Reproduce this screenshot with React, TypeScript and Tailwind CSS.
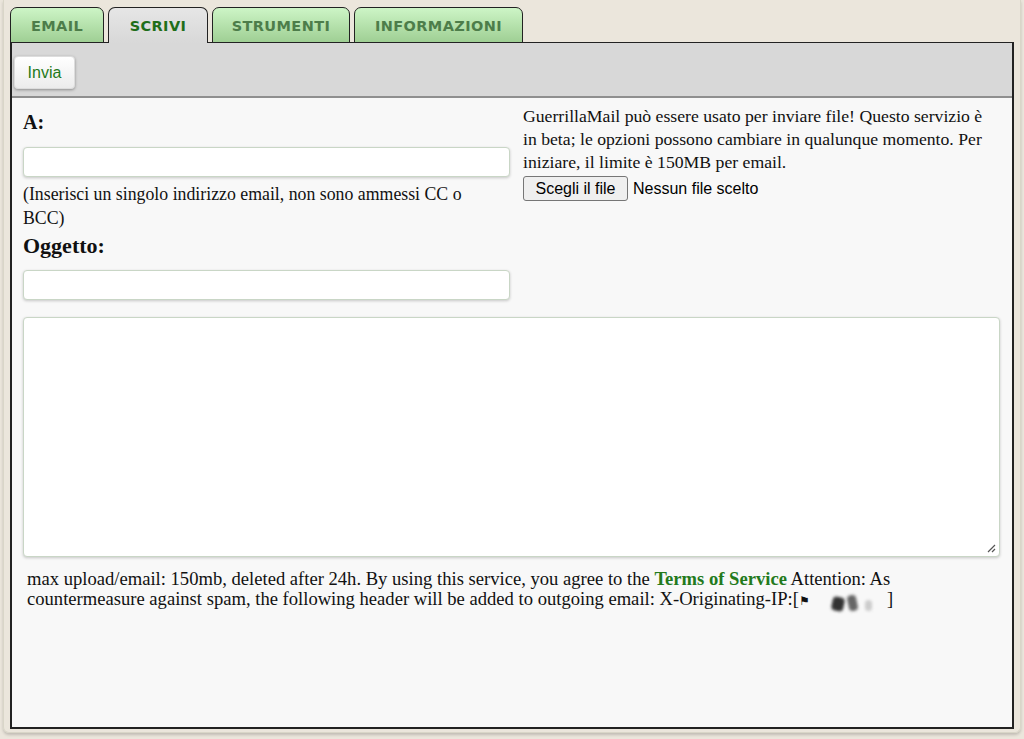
import React from 'react';

const tabs = [
  { label: 'EMAIL', w: 'w-[94px]', active: false },
  { label: 'SCRIVI', w: 'w-[100px]', active: true },
  { label: 'STRUMENTI', w: 'w-[138px]', active: false },
  { label: 'INFORMAZIONI', w: 'w-[169px]', active: false },
];

const serif = "font-['Liberation_Serif',Georgia,serif]";
const sans = "font-['Liberation_Sans',Arial,sans-serif]";

function Tabs() {
  return (
    <div className="flex gap-[4px] pl-[6px] pt-[7px]">
      {tabs.map((t) => (
        <div
          key={t.label}
          className={`${t.w} h-[36px] -mb-px flex items-center justify-center rounded-t-[7px] border border-[#222] pt-[3px] text-[14.5px] font-bold tracking-[0.4px] font-['DejaVu_Sans',Verdana,sans-serif] ${
            t.active
              ? 'relative z-10 border-b-0 bg-gradient-to-b from-[#e6e6e6] to-[#d8d8d8] text-[#1f6e1a]'
              : 'bg-gradient-to-b from-[#cdf5c6] to-[#9fcf94] text-[#4d7d4a]'
          }`}
        >
          {t.label}
        </div>
      ))}
    </div>
  );
}

function Field() {
  return (
    <div className="h-[30px] w-full rounded-[4px] border border-[#c9d6c6] bg-white shadow-[0_1px_3px_rgba(0,0,0,0.2)]" />
  );
}

export default function App() {
  return (
    <div className="h-[739px] w-[1024px] overflow-hidden bg-[#ebe6dc]">
      <div className="mx-[3px] h-[733px] rounded-b-[6px] border-x border-b border-[#d9d6c8] shadow-[0_2px_3px_rgba(0,0,0,0.18)]">
        <Tabs />
        <div className="mx-[6px] flex h-[687px] flex-col border-2 border-t border-[#222] bg-[#f8f8f8]">
          <div className="flex h-[55px] items-start border-b-2 border-[#8f8f8f] bg-[#d8d8d8] pl-[2px] pt-[13px]">
            <button
              className={`${sans} h-[33px] w-[61px] rounded-[4px] border border-[#ddd] bg-gradient-to-b from-white to-[#ececec] text-[16px] text-[#1f7a1a] shadow-[0_1px_3px_rgba(0,0,0,0.35)]`}
            >
              Invia
            </button>
          </div>
          <div className="flex pl-[11px] pr-[11px]">
            <div className={`${serif} w-[487px] text-[#111]`}>
              <div className="pt-[12px] text-[20px] font-bold leading-[24px]">A:</div>
              <div className="mt-[13px]">
                <Field />
              </div>
              <div className="mt-[5px] text-[17.8px] leading-[24px]">
                (Inserisci un singolo indirizzo email, non sono ammessi CC o
                <br />
                BCC)
              </div>
              <div className="mt-[3px] text-[22px] font-bold leading-[26px]">Oggetto:</div>
              <div className="mt-[11px]">
                <Field />
              </div>
            </div>
            <div className="ml-[13px] flex-1 pt-[7px]">
              <p className={`${serif} pr-[4px] text-[17.7px] leading-[23px] text-[#111]`}>
                GuerrillaMail può essere usato per inviare file! Questo servizio è in beta; le opzioni
                possono cambiare in qualunque momento. Per iniziare, il limite è 150MB per email.
              </p>
              <div className={`${sans} mt-[2px] flex items-center text-[16px] text-black`}>
                <span className="flex h-[25px] w-[105px] items-center justify-center rounded-[3px] border border-[#767676] bg-[#efefef]">
                  Scegli il file
                </span>
                <span className="ml-[5px]">Nessun file scelto</span>
              </div>
            </div>
          </div>
          <div className="relative ml-[11px] mr-[12px] mt-[17px] h-[240px] rounded-[4px] border border-[#c9d6c6] bg-white shadow-[0_1px_3px_rgba(0,0,0,0.2)]">
            <svg className="absolute bottom-[3px] right-[3px]" width="9" height="9" viewBox="0 0 9 9">
              <path d="M8 1L1 8M8 5L5 8" stroke="#555" strokeWidth="1.2" />
            </svg>
          </div>
          <p className={`${serif} ml-[15px] mt-[12px] w-[930px] text-[18.6px] leading-[20px] text-[#111]`}>
            max upload/email: 150mb, deleted after 24h. By using this service, you agree to the{' '}
            <span className="font-bold text-[#237a1c]">Terms of Service</span> Attention: As{' '}
            <br />
            countermeasure against spam, the following header will be added to outgoing email:
            X-Originating-IP:[
            <span className="inline-flex w-[88px] items-end align-middle">
              <span className="text-[12px]">⚑</span>
              <span className="ml-[22px] inline-block h-[14px] w-[12px] rotate-12 rounded-sm bg-[#333] blur-[1.5px]" />
              <span className="ml-[4px] inline-block h-[16px] w-[9px] -rotate-12 rounded-sm bg-[#666] blur-[1.5px]" />
              <span className="ml-[8px] inline-block h-[11px] w-[7px] rounded-sm bg-[#ccc] blur-[1.5px]" />
            </span>
            ]
          </p>
        </div>
      </div>
    </div>
  );
}
